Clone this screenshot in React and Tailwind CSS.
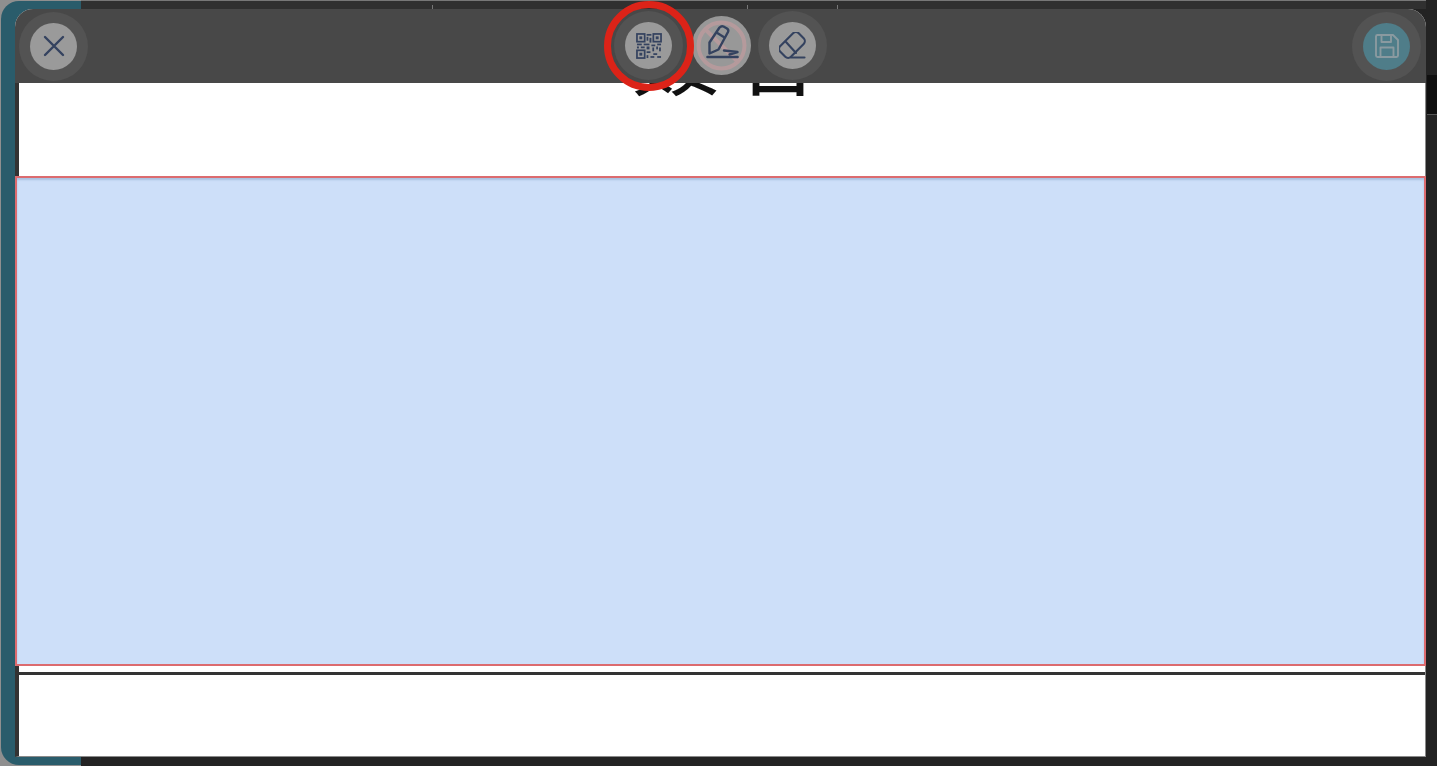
import React from "react";

function Round({ children, face = "bg-[#9a9a9a]" }) {
  return (
    <div className="w-[69px] h-[69px] rounded-full flex items-center justify-center shrink-0 bg-[#535353]">
      <div className={`w-[47px] h-[47px] rounded-full flex items-center justify-center ${face}`}>{children}</div>
    </div>
  );
}

const ink = "#34425f";

function CloseIcon() {
  return (
    <svg width="24" height="24" viewBox="0 0 24 24" fill="none" stroke={ink} strokeWidth="2.4" strokeLinecap="round">
      <path d="M3 3L21 21M21 3L3 21" />
    </svg>
  );
}

function QrIcon() {
  return (
    <svg width="26" height="26" viewBox="0 0 27 27" fill="none" stroke={ink} strokeWidth="1.8">
      <rect x="1" y="1" width="8" height="8" />
      <rect x="18" y="1" width="8" height="8" />
      <rect x="1" y="18" width="8" height="8" />
      <g fill={ink} stroke="none">
        <rect x="3.5" y="3.5" width="3" height="3" />
        <rect x="20.5" y="3.5" width="3" height="3" />
        <rect x="3.5" y="20.5" width="3" height="3" />
        <rect x="11" y="1" width="5" height="1.8" />
        <rect x="11" y="4" width="1.8" height="4" />
        <rect x="14" y="5" width="2" height="5" />
        <rect x="1" y="11" width="5" height="1.8" />
        <rect x="1" y="14" width="2" height="2" />
        <rect x="5" y="14" width="4" height="1.8" />
        <rect x="8" y="11" width="6" height="1.8" />
        <rect x="11" y="14" width="3" height="3" />
        <rect x="16" y="12" width="4" height="1.8" />
        <rect x="22" y="11" width="4" height="1.8" />
        <rect x="17" y="15" width="1.8" height="4" />
        <rect x="21" y="14" width="1.8" height="3" />
        <rect x="24" y="15" width="1.8" height="4" />
        <rect x="11" y="19" width="4" height="1.8" />
        <rect x="18" y="21" width="4" height="1.8" />
        <rect x="11" y="23" width="1.8" height="3" />
        <rect x="15" y="24" width="4" height="1.8" />
        <rect x="22" y="24" width="4" height="1.8" />
      </g>
    </svg>
  );
}

function NoSignIcon() {
  return (
    <svg width="59" height="59" viewBox="0 0 59 59" fill="none" className="absolute inset-0">
      <circle cx="29.5" cy="29.5" r="23" stroke="#b59a9c" strokeWidth="4" />
      <path d="M13 13L46 46" stroke="#b59a9c" strokeWidth="4" />
      <path d="M17.5 37.5V26.5L27.5 11.5Q29.5 9.5 31.5 10.5L35 12.5Q37 14 36 16L26.5 33.5Z" stroke={ink} strokeWidth="2.4" strokeLinejoin="round" />
      <path d="M24.5 16.5L32.5 21.5" stroke={ink} strokeWidth="2.4" />
      <path d="M32 34.5L45.5 36L37.5 38.5" stroke={ink} strokeWidth="2.4" strokeLinejoin="round" strokeLinecap="round" />
      <path d="M15.5 41H45.5" stroke={ink} strokeWidth="2.6" strokeLinecap="round" />
    </svg>
  );
}

function EraserIcon() {
  return (
    <svg width="28" height="28" viewBox="0 0 28 28" fill="none" stroke={ink} strokeWidth="2.1" strokeLinecap="round" strokeLinejoin="round">
      <rect x="0" y="5.5" width="26" height="15" rx="4" transform="rotate(-45 13 13)" />
      <path d="M7 10L17 21" />
      <path d="M12 25.5H25.5" />
    </svg>
  );
}

function SaveIcon() {
  return (
    <svg width="26" height="26" viewBox="0 0 26 26" fill="none" stroke="#8a9aa0" strokeWidth="1.9" strokeLinejoin="round">
      <path d="M2 3.5A1.5 1.5 0 0 1 3.5 2H19L24 7V22.5A1.5 1.5 0 0 1 22.5 24H3.5A1.5 1.5 0 0 1 2 22.5Z" />
      <path d="M7.5 2V9H17V2" />
      <path d="M6.5 24V14.5H19.5V24" />
    </svg>
  );
}

export default function App() {
  return (
    <div className="relative w-[1437px] h-[766px] overflow-hidden bg-[#232323] font-['Noto_Sans_CJK_TC','Noto_Sans_CJK_SC','Liberation_Sans',sans-serif]">
      {/* page behind the modal */}
      <div className="absolute left-[81px] top-0 w-[1345px] h-[9px] bg-[#303030] border-t border-t-[#777777]" />
      <div className="absolute left-[432px] top-[5px] w-px h-[4px] bg-[#777777]" />
      <div className="absolute left-[747px] top-[5px] w-px h-[4px] bg-[#777777]" />
      <div className="absolute left-[837px] top-[5px] w-px h-[4px] bg-[#777777]" />
      <div className="absolute left-[1427px] top-[75px] w-[10px] h-[40px] bg-[#0f0f0f] border-b border-b-[#555555]" />
      <div className="absolute left-0 top-0 w-[81px] h-[766px] bg-[#8f8f8f]">
        <div className="mt-px ml-px w-[80px] h-[764px] bg-[#2a5c6b] rounded-l-[18px]" />
      </div>

      {/* modal */}
      <div className="absolute left-[15px] top-[9px] w-[1411px] h-[748px] rounded-t-[18px] overflow-hidden flex flex-col bg-white">
        {/* toolbar */}
        <div className="relative z-10 h-[74px] shrink-0 bg-[#484848] flex items-center justify-between pl-[4px] pr-[5px]">
          <Round><CloseIcon /></Round>
          <div className="absolute left-[599px] top-[2px] flex items-center">
            <Round><QrIcon /></Round>
            <div className="relative w-[59px] h-[59px] rounded-full bg-[#989898] ml-[9px] shrink-0">
              <NoSignIcon />
            </div>
            <div className="ml-[7px]">
              <Round><EraserIcon /></Round>
            </div>
          </div>
          <Round face="bg-[#4f7d89]"><SaveIcon /></Round>
        </div>

        {/* sheet */}
        <div className="relative flex-1 flex flex-col border-l-[4px] border-l-[#333333] border-r border-r-[#8a8a8a] border-b border-b-[#8a8a8a]">
          <div className="h-[93px] shrink-0 overflow-hidden flex justify-center">
            <div className="text-[90px] leading-none font-normal tracking-[-0.1em] whitespace-nowrap text-[#111111] mt-[-79px] ml-[-8px]">簽 名</div>
          </div>
          <div className="ml-[-4px] mr-[-1px] h-[490px] shrink-0 bg-[#cddff9] border-2 border-[#dc6b6f] shadow-[inset_0_2px_2px_#a9c0e0]" />
          <div className="h-[6px] shrink-0 bg-white" />
          <div className="ml-[-4px] h-[3px] shrink-0 bg-[#333333]" />
          <div className="flex-1 bg-white" />
        </div>
      </div>

      {/* annotation ring */}
      <div className="absolute z-20 left-[604px] top-[1px] w-[90px] h-[90px] rounded-full border-[7px] border-[#dc2318]" />
    </div>
  );
}
